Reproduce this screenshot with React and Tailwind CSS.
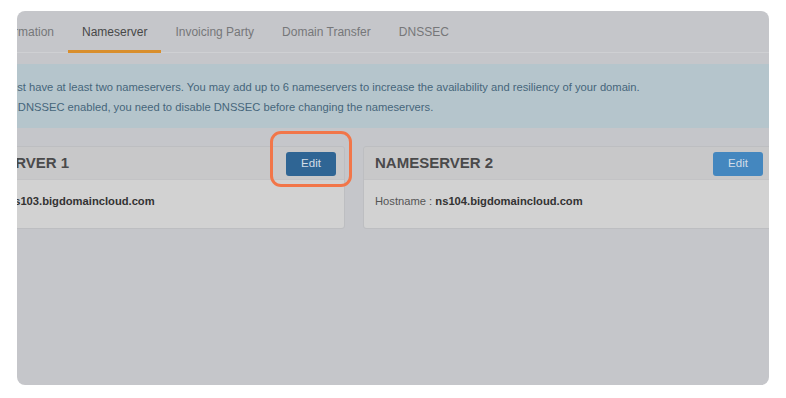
export default function App() {
  const tabs = ['Information', 'Nameserver', 'Invoicing Party', 'Domain Transfer', 'DNSSEC']
  const active = 'Nameserver'

  const servers = [
    { name: 'NAMESERVER 1', host: 'ns103.bigdomaincloud.com', highlight: true },
    { name: 'NAMESERVER 2', host: 'ns104.bigdomaincloud.com', highlight: false },
  ]

  return (
    <div
      className="w-[786px] h-[398px] bg-white pt-[11px] pl-[17px]"
      style={{ fontFamily: '"Liberation Sans", Arial, sans-serif' }}
    >
      <div className="w-[752px] h-[374px] rounded-lg overflow-hidden bg-[#c5c6ca]">
        <div className="w-[842px] -ml-[84px]">
          {/* tabs */}
          <div className="h-[42px] border-b border-[#cfd0d3] flex pl-[47px]">
            {tabs.map((t) => (
              <div
                key={t}
                className={`relative px-[14px] flex items-center text-[12px] ${
                  t === active ? 'text-[#484848]' : 'text-[#767779]'
                }`}
              >
                {t}
                {t === active && (
                  <span className="absolute left-0 right-0 -bottom-px h-[3px] bg-[#d98e2c]" />
                )}
              </div>
            ))}
          </div>

          {/* alert */}
          <div className="mt-[11px] bg-[#b5c5cc] pt-[13px] pb-[11px] pl-[27px] text-[11.2px] leading-[20px] text-[#46667b]">
            <p className="whitespace-nowrap">
              Domain must have at least two nameservers. You may add up to 6 nameservers to increase the availability and resiliency of your domain.
            </p>
            <p className="whitespace-nowrap">
              If you have DNSSEC enabled, you need to disable DNSSEC before changing the nameservers.
            </p>
          </div>

          {/* nameserver panels */}
          <div className="mt-[18px] grid grid-cols-2 gap-[18px]">
            {servers.map((s) => (
              <div key={s.name} className="border border-[#bdbec1] rounded-[3px]">
                <div
                  className={`h-[33px] bg-[#c8c8c9] rounded-t-[3px] border-b border-[#c3c3c5] flex items-center justify-between ${
                    s.highlight ? 'pl-[17px] pr-[8px]' : 'px-[11px]'
                  }`}
                >
                  <h3 className="text-[15px] font-bold text-[#4a4a4b] pt-px">{s.name}</h3>
                  <div className="relative">
                    <button
                      className={`w-[50px] h-[24px] rounded-[3px] text-[11.5px] text-[#d3dde7] ${
                        s.highlight ? 'bg-[#2f6594]' : 'bg-[#4487bf]'
                      }`}
                    >
                      Edit
                    </button>
                    {s.highlight && (
                      <span className="absolute -left-[16px] -right-[16px] -top-[19px] -bottom-[11px] border-[3px] border-[#f27649] rounded-[11px]" />
                    )}
                  </div>
                </div>
                <div
                  className={`h-[48px] bg-[#d2d2d2] rounded-b-[3px] pt-[13px] text-[11.2px] text-[#555] ${
                    s.highlight ? 'pl-[13px]' : 'px-[11px]'
                  }`}
                >
                  Hostname : <span className="font-bold text-[#333]">{s.host}</span>
                </div>
              </div>
            ))}
          </div>
        </div>
      </div>
    </div>
  )
}
